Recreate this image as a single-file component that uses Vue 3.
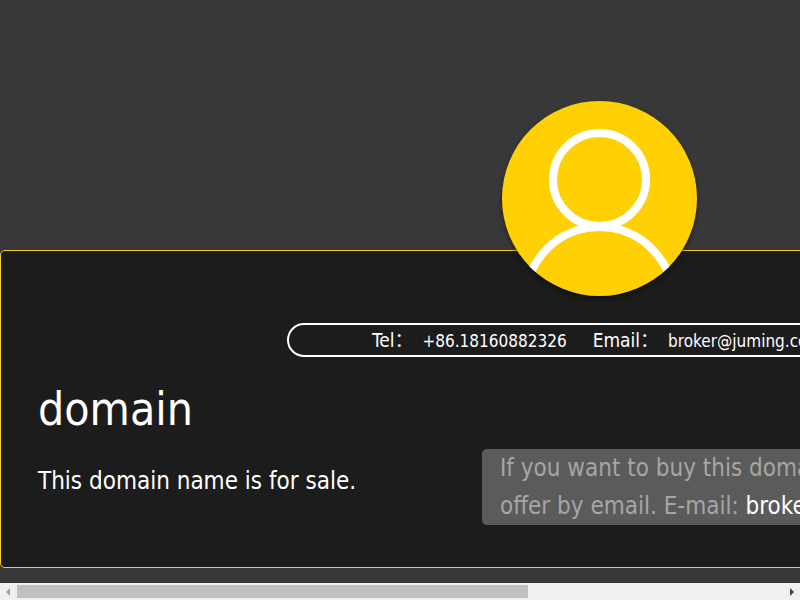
<template>
  <div class="window">
    <div class="viewport">
      <main class="page">
        <section class="panel">

          <!-- Avatar -->
          <div class="avatar">
            <svg viewBox="0 0 195 195" aria-hidden="true">
              <circle cx="97.5" cy="78.5" r="46.5" />
              <path class="shoulders" d="M27 175 C41 143 67 126 97.5 126 C128 126 154 143 168 175" />
            </svg>
          </div>

          <!-- Contact bar -->
          <div class="contact">
            <span v-for="item in contacts" :key="item.label" class="contact-item">
              <span class="contact-label">{{ item.label }}</span>
              <span class="contact-value">{{ item.value }}</span>
            </span>
          </div>

          <!-- Domain + offer -->
          <div class="info">
            <div class="domain">
              <h1 class="domain-name">domain</h1>
              <p class="domain-desc">This domain name is for sale.</p>
            </div>
            <p class="offer">
              If you want to buy this domain name, please make your<br />
              offer by email. E-mail: <a href="mailto:broker@juming.com">broker@juming.com</a>
            </p>
          </div>

        </section>
      </main>
    </div>

    <!-- Horizontal scrollbar -->
    <div class="scrollbar">
      <button class="arrow" type="button" aria-label="Scroll left" disabled>
        <svg viewBox="0 0 17 17"><path d="M10 5 L6 9 L10 13 Z" /></svg>
      </button>
      <div class="track">
        <div class="thumb"></div>
      </div>
      <button class="arrow" type="button" aria-label="Scroll right">
        <svg viewBox="0 0 17 17"><path d="M7 5 L11 9 L7 13 Z" /></svg>
      </button>
    </div>
  </div>
</template>

<script setup>
const contacts = [
  { label: 'Tel：', value: '+86.18160882326' },
  { label: 'Email：', value: 'broker@juming.com' },
]
</script>

<style>
body {
  background: #383838;
}
</style>

<style scoped>
.window {
  display: flex;
  flex-direction: column;
  height: 100vh;
  overflow: hidden;
  color: #fff;
  font-family: Tahoma, "DejaVu Sans Condensed", "Noto Sans", "Noto Sans CJK SC", sans-serif;
}

.viewport {
  flex: 1;
  min-height: 0;
  overflow: hidden;
}

.page {
  min-width: 1199px;
  padding-top: 250px;
}

/* ── panel ── */
.panel {
  box-sizing: border-box;
  padding: 0 37px 42px;
  background: #1c1c1c;
  border: 1px solid #f5cb2e;
  border-radius: 5px;
}

.avatar {
  position: relative;
  width: 195px;
  height: 195px;
  margin: -150px auto 0;
  overflow: hidden;
  background: #ffd105;
  border-radius: 50%;
  box-shadow: 0 3px 5px rgba(0, 0, 0, 0.4);
}

.avatar svg {
  display: block;
  fill: none;
  stroke: #fff;
  stroke-width: 8;
}

/* cut the shoulders off level above the bottom of the circle */
.shoulders {
  clip-path: polygon(-10% -20%, 110% -20%, 110% 91%, -10% 91%);
}

/* ── contact bar ── */
.contact {
  box-sizing: border-box;
  display: flex;
  align-items: center;
  gap: 26px;
  width: 625px;
  height: 34px;
  margin: 27px auto 0;
  padding: 0 83px 4px;
  border: 2px solid #fff;
  border-radius: 17px;
}

.contact-item {
  display: flex;
  align-items: baseline;
  gap: 9px;
  white-space: nowrap;
}

.contact-label {
  font-size: 19px;
}

.contact-value {
  font-size: 17px;
}

/* ── domain + offer ── */
.info {
  display: flex;
  align-items: flex-end;
  justify-content: space-between;
  margin-top: 22px;
}

.domain-name {
  margin: 0;
  font-size: 46px;
  font-weight: 400;
  line-height: 60px;
}

.domain-desc {
  margin: 22px 0 0;
  padding-bottom: 24px;
  font-size: 24px;
  line-height: 40px;
}

.offer {
  box-sizing: border-box;
  width: 679px;
  margin: 0;
  padding: 0 18px;
  color: #a6a6a6;
  font-size: 24px;
  line-height: 38px;
  white-space: nowrap;
  background: #5b5b5b;
  border-radius: 5px;
}

.offer a {
  color: #fff;
  text-decoration: none;
}

/* ── scrollbar ── */
.scrollbar {
  display: flex;
  height: 17px;
  background: #f0f0f0;
}

.arrow {
  width: 17px;
  height: 17px;
  padding: 0;
  background: none;
  border: 0;
}

.arrow svg {
  display: block;
  fill: #404040;
}

.arrow:disabled svg {
  fill: #a0a0a0;
}

.track {
  flex: 1;
  padding: 2px 0;
}

.thumb {
  width: 66.7%;
  height: 13px;
  background: #c0c0c0;
}
</style>
